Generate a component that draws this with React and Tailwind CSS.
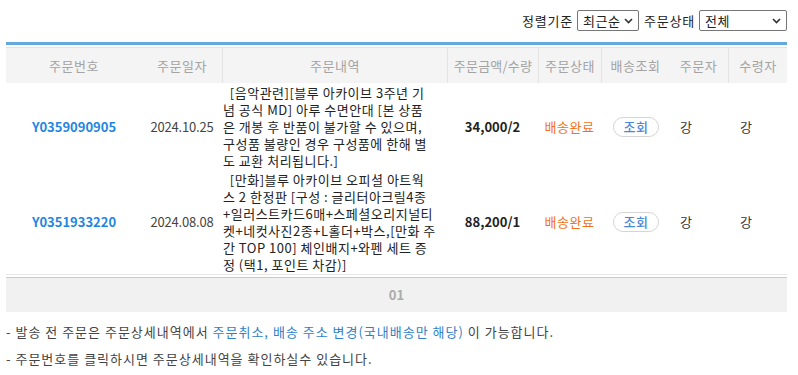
import React, { useState } from 'react';

const font = { fontFamily: '"Noto Sans CJK KR", "Noto Sans", sans-serif' };

const orders = [
  {
    id: 'Y0359090905',
    date: '2024.10.25',
    lines: [
      '\u00a0\u00a0[음악관련][블루 아카이브 3주년 기',
      '념 공식 MD] 아루 수면안대 [본 상품',
      '은 개봉 후 반품이 불가할 수 있으며,',
      '구성품 불량인 경우 구성품에 한해 별',
      '도 교환 처리됩니다.]',
    ],
    amount: '34,000/2',
    status: '배송완료',
    buyer: '강',
    receiver: '강',
  },
  {
    id: 'Y0351933220',
    date: '2024.08.08',
    lines: [
      '\u00a0\u00a0[만화]블루 아카이브 오피셜 아트웍',
      '스 2 한정판 [구성 : 글리터아크릴4종',
      '+일러스트카드6매+스페셜오리지널티',
      '켓+네컷사진2종+L홀더+박스,[만화 주',
      '간 TOP 100] 체인배지+와펜 세트 증',
      '정 (택1, 포인트 차감)]',
    ],
    amount: '88,200/1',
    status: '배송완료',
    buyer: '강',
    receiver: '강',
  },
];

const Chevron = () => (
  <svg width="9" height="6" viewBox="0 0 9 6" className="pointer-events-none absolute right-[6px] top-[8px]">
    <path d="M1 1l3.5 3.5L8 1" fill="none" stroke="#333" strokeWidth="1.6" />
  </svg>
);

const SelectBox = ({ value, options, onChange, className }) => (
  <div className={`relative h-[21px] ${className}`}>
    <select
      value={value}
      onChange={e => onChange(e.target.value)}
      className="h-full w-full appearance-none border border-[#767676] rounded-[2px] bg-white pl-[5px] pr-[16px] text-[13px] leading-[19px] tracking-[0.6px] text-[#222] outline-none"
    >
      {options.map(o => <option key={o}>{o}</option>)}
    </select>
    <Chevron />
  </div>
);

const cols = 'grid grid-cols-[136px_80px_225px_91px_63px_68px_59px_59px]';

export default function App() {
  const [sort, setSort] = useState('최근순');
  const [state, setState] = useState('전체');

  return (
    <div style={font} className="w-[798px] h-[375px] bg-white text-[13px] text-[#333] overflow-hidden">
      <div className="flex items-center justify-end gap-[4px] pt-[10px] pr-[11px] h-[31px]">
        <span className="leading-[21px] tracking-[0.8px] text-[#222]">정렬기준</span>
        <SelectBox value={sort} onChange={setSort} options={['최근순', '과거순']} className="w-[62px]" />
        <span className="ml-[1px] leading-[21px] tracking-[0.8px] text-[#222]">주문상태</span>
        <SelectBox value={state} onChange={setState} options={['전체', '배송완료', '주문취소']} className="w-[88px]" />
      </div>

      <div className="ml-[6px] w-[781px] mt-[11px]">
        <div className="border-t-[3px] border-[#64a9dc] pt-[2px]">
          <div className={`${cols} border-t border-[#e2e2e2] bg-[#f4f4f4] h-[36px] items-stretch tracking-[0.6px] text-[#a3a3a3]`}>
            <div className="flex items-center justify-center">주문번호</div>
            <div className="flex items-center justify-center">주문일자</div>
            <div className="flex items-center justify-center border-l border-[#e3e3e3]">주문내역</div>
            <div className="flex items-center justify-center border-l border-[#e3e3e3] whitespace-nowrap tracking-[0.2px]">주문금액/수량</div>
            <div className="flex items-center justify-center border-l border-[#e3e3e3]">주문상태</div>
            <div className="flex items-center justify-center border-l border-[#e3e3e3]">배송조회</div>
            <div className="flex items-center justify-center">주문자</div>
            <div className="flex items-center justify-center border-l border-[#e3e3e3]">수령자</div>
          </div>
        </div>

        {orders.map(o => (
          <div key={o.id} className={`${cols} items-center py-[1px]`}>
            <div className="text-center font-bold text-[#1f86e0] cursor-pointer">{o.id}</div>
            <div className="text-center tracking-[-0.2px] text-[#444]">{o.date}</div>
            <div className="pl-[1px] leading-[17px] tracking-[0.5px] text-[#222] whitespace-nowrap">
              {o.lines.map((l, i) => <div key={i}>{l}</div>)}
            </div>
            <div className="text-center font-bold text-[#222]">{o.amount}</div>
            <div className="text-center tracking-[0.6px] text-[#f2711c]">{o.status}</div>
            <div className="flex justify-center pl-[2px]">
              <button className="h-[20px] w-[46px] rounded-full border border-[#d5d5d5] bg-white text-[13px] leading-[18px] font-medium tracking-[0.5px] text-[#4a88d6]">조회</button>
            </div>
            <div className="pl-[11px] text-[#333]">{o.buyer}</div>
            <div className="pl-[12px] text-[#333]">{o.receiver}</div>
          </div>
        ))}

        <div className="border-t border-[#e6e6e6] pt-[2px]">
          <div className="border-t border-[#c9c9c9] bg-[#f1f1f1] h-[35px] flex items-center justify-center font-bold text-[#ababab]">01</div>
        </div>
      </div>

      <div className="ml-[6px] mt-[11px] flex flex-col gap-[9px] tracking-[1px] text-[#444] leading-[18px]">
        <p>- 발송 전 주문은 주문상세내역에서 <span className="text-[#2f7fc8]">주문취소, 배송 주소 변경(국내배송만 해당)</span> 이 가능합니다.</p>
        <p>- 주문번호를 클릭하시면 주문상세내역을 확인하실수 있습니다.</p>
      </div>
    </div>
  );
}
